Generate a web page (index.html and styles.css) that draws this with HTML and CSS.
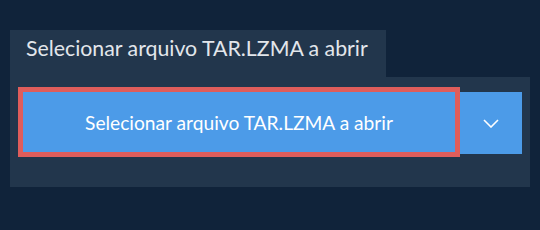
FILE: index.html
```html
<!DOCTYPE html>
<html>
<head>
<meta charset="utf-8">
<link rel="stylesheet" href="styles.css">
</head>
<body>
<div class="picker">
  <div class="tab">Selecionar arquivo TAR.LZMA a abrir</div>
  <div class="panel">
    <button class="main-btn">Selecionar arquivo TAR.LZMA a abrir</button>
    <button class="drop-btn" aria-label="Mais opções">
      <svg width="16" height="9" viewBox="0 0 16 9"><path d="M1 1 L8 8 L15 1" fill="none" stroke="#ffffff" stroke-width="1.6"/></svg>
    </button>
  </div>
</div>
</body>
</html>
```
FILE: styles.css
```css
html, body {
  margin: 0;
  padding: 0;
}
body {
  background: #10233a;
  width: 540px;
  height: 230px;
  font-family: Lato, "Open Sans", sans-serif;
}
.picker {
  padding: 30px 0 0 10px;
}
.tab {
  display: inline-block;
  background: #22364c;
  color: #e2e6eb;
  font-size: 21.3px;
  line-height: 26px;
  padding: 5px 18px 16px 16px;
}
.panel {
  width: 504px;
  background: #22364c;
  padding: 10px 8px 30px 8px;
  display: flex;
  align-items: flex-start;
}
.main-btn {
  width: 442px;
  height: 70px;
  box-sizing: border-box;
  border: 5px solid #df5d5b;
  background: #4c9be8;
  color: #ffffff;
  font-family: Lato, "Open Sans", sans-serif;
  font-size: 19.2px;
  padding: 0;
  margin: 0;
}
.drop-btn {
  width: 62px;
  height: 62px;
  margin: 5px 0 0 0;
  border: none;
  background: #4c9be8;
  padding: 0;
  display: flex;
  align-items: center;
  justify-content: center;
}
```
